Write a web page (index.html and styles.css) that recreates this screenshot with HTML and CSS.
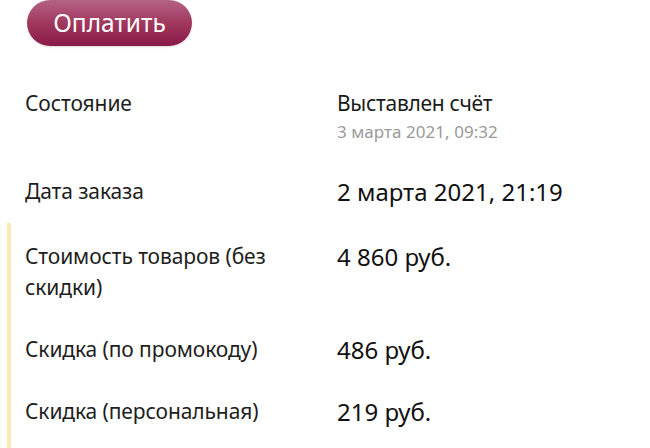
FILE: index.html
```html
<!DOCTYPE html>
<html lang="ru">
<head>
<meta charset="utf-8">
<link rel="stylesheet" href="styles.css">
</head>
<body>
<div class="page">
  <div class="actions">
    <button class="pay">Оплатить</button>
  </div>
  <div class="info">
    <div class="row">
      <div class="label">Состояние</div>
      <div class="value">
        <div class="status">Выставлен счёт</div>
        <div class="sub">3 марта 2021, 09:32</div>
      </div>
    </div>
    <div class="row">
      <div class="label">Дата заказа</div>
      <div class="value big">2 марта 2021, 21:19</div>
    </div>
  </div>
  <div class="prices">
    <div class="row">
      <div class="label">Стоимость товаров (без скидки)</div>
      <div class="value big">4 860 руб.</div>
    </div>
    <div class="row">
      <div class="label">Скидка (по промокоду)</div>
      <div class="value big">486 руб.</div>
    </div>
    <div class="row">
      <div class="label">Скидка (персональная)</div>
      <div class="value big">219 руб.</div>
    </div>
  </div>
</div>
</body>
</html>
```
FILE: styles.css
```css
html, body {
  margin: 0;
  padding: 0;
  background: #fff;
}
body {
  font-family: "Noto Sans", "Open Sans", sans-serif;
  color: #1a1a1a;
  overflow: hidden;
}
.page {
  width: 650px;
  height: 448px;
  overflow: hidden;
}
.actions {
  padding-left: 27px;
  margin-bottom: 27px;
}
.pay {
  display: block;
  width: 165px;
  height: 46px;
  border: none;
  border-radius: 23px;
  background: linear-gradient(to bottom, #b46384 0%, #a0385f 50%, #8a1a46 100%);
  color: #fff;
  font-family: inherit;
  font-size: 24.5px;
  padding: 0 0 2px;
  box-shadow: 0 1px 2px rgba(0,0,0,0.15);
}
.info {
  padding-left: 25px;
}
.row {
  display: grid;
  grid-template-columns: 312px 1fr;
  padding: 15px 0 16px;
}
.label {
  font-size: 21px;
  line-height: 31px;
  color: #1e1e1e;
  letter-spacing: -0.1px;
  padding-right: 40px;
}
.label.tight {
  letter-spacing: -0.5px;
}
.status {
  font-size: 21px;
  line-height: 31px;
  letter-spacing: -0.3px;
  color: #1a1a1a;
}
.sub {
  font-size: 17px;
  line-height: 26px;
  color: #9a9a9a;
  letter-spacing: 0.05px;
}
.big {
  font-size: 24px;
  line-height: 31px;
  color: #111;
}
.prices {
  margin-left: 7px;
  border-left: 4px solid #fbeab6;
  padding-left: 14px;
  padding-top: 3px;
  height: 300px;
}
```
